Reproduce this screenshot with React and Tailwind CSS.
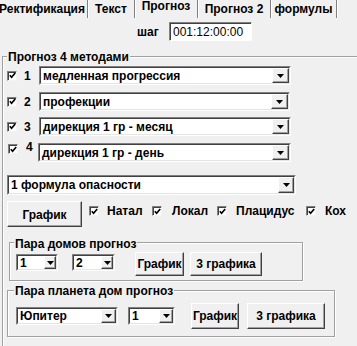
import React from 'react';

const Arrow = () => (
  <svg width="7" height="4" viewBox="0 0 7 4">
    <path d="M0 0h7L3.5 4z" fill="#000" />
  </svg>
);

const Check = ({ className = '' }) => (
  <span className={`flex w-[10px] h-[10px] shrink-0 items-center justify-center bg-white border border-t-[#808080] border-l-[#808080] border-r-[#f4f4f4] border-b-[#f4f4f4] shadow-[inset_1px_1px_0_#404040] ${className}`}>
    <svg width="7" height="7" viewBox="0 0 7 7">
      <path d="M0.8 3.2 L2.6 5.2 L6.2 1" stroke="#000" strokeWidth="1.7" fill="none" />
    </svg>
  </span>
);

const Select = ({ value, className = '', btn = 'w-[17px]' }) => (
  <div className={`flex shrink-0 border border-t-[#808080] border-l-[#808080] border-r-white border-b-white ${className}`}>
    <div className="flex flex-1 bg-white border border-t-[#404040] border-l-[#404040] border-r-[#e4e4e4] border-b-[#e4e4e4]">
      <span className="flex-1 pl-[2px] leading-[14px] self-center whitespace-nowrap overflow-hidden">{value}</span>
      <span className={`flex items-center justify-center bg-[#f0f0f0] border border-t-white border-l-white border-r-[#404040] border-b-[#404040] shadow-[inset_-1px_-1px_0_#a0a0a0] ${btn}`}>
        <Arrow />
      </span>
    </div>
  </div>
);

const Button = ({ children, className = '' }) => (
  <button className={`flex shrink-0 items-center justify-center bg-[#f0f0f0] border border-t-white border-l-white border-r-[#404040] border-b-[#404040] shadow-[inset_-1px_-1px_0_#a0a0a0] font-bold ${className}`}>
    {children}
  </button>
);

const Group = ({ title, className = '', legend = '', children }) => (
  <div className={`relative border border-[#a0a0a0] shadow-[inset_1px_1px_0_#fff,1px_1px_0_#fff] ${className}`}>
    <span className={`absolute bg-[#f0f0f0] px-[1px] leading-[14px] whitespace-nowrap ${legend}`}>{title}</span>
    {children}
  </div>
);

const tabs = [
  { label: 'Ректификация', w: 'w-[91px]' },
  { label: 'Текст', w: 'w-[47px]' },
  { label: 'Прогноз', w: 'w-[63px]', active: true },
  { label: 'Прогноз 2', w: 'w-[73px]' },
  { label: 'формулы', w: 'w-[66px]' },
];

const rows = [
  { n: '1', v: 'медленная прогрессия', pad: 'pl-[4px]', sel: 'w-[252px]', mt: 'mt-[9px]' },
  { n: '2', v: 'профекции', pad: 'pl-[4px]', sel: 'w-[251px]', mt: 'mt-[7px]' },
  { n: '3', v: 'дирекция 1 гр - месяц', pad: 'pl-[4px]', sel: 'w-[252px]', mt: 'mt-[6px]' },
];

export default function App() {
  return (
    <div className="w-[357px] h-[346px] overflow-hidden bg-[#f0f0f0] text-black text-[12px] font-bold font-['Liberation_Sans',Arial,sans-serif] flex flex-col">
      {/* tabs */}
      <div className="flex h-[18px] ml-[-3px] shrink-0">
        {tabs.map((t) => (
          <div
            key={t.label}
            className={`${t.w} h-[18px] border-r border-r-[#808080] shadow-[1px_0_0_#fff] text-center whitespace-nowrap ${t.active ? 'leading-[12px]' : 'pt-[2px] leading-[14px]'}`}
          >
            {t.label}
          </div>
        ))}
      </div>

      {/* step */}
      <div className="flex items-center mt-[4px] ml-[137px] shrink-0">
        <span className="w-[32px] leading-[14px]">шаг</span>
        <div className="w-[83px] h-[19px] flex items-center bg-white border border-t-[#808080] border-l-[#808080] border-r-white border-b-white shadow-[inset_1px_1px_0_#404040] pl-[3px] font-normal text-[12px] leading-[14px]">
          001:12:00:00
        </div>
      </div>

      {/* main group */}
      <Group title="Прогноз 4 методами" className="ml-[2px] mt-[15px] flex-1 mr-[-10px] mb-[-10px]" legend="-top-[7px] left-[4px]">
        <div className="flex flex-col pl-[0px]">
          {rows.map((r) => (
            <div key={r.n} className={`flex items-center h-[19px] ${r.mt}`}>
              <div className={`w-[21px] ${r.pad}`}><Check /></div>
              <span className="w-[15px] leading-[14px]">{r.n}</span>
              <Select value={r.v} className={`${r.sel} h-[19px]`} />
            </div>
          ))}
          <div className="flex items-start h-[19px] mt-[7px]">
            <div className="w-[21px] pl-[5px] mt-[1px]"><Check /></div>
            <span className="w-[12px] leading-[14px] -mt-[3px] ml-[2px]">4</span>
            <Select value="дирекция 1 гр - день" className="w-[253px] h-[19px]" />
          </div>

          <Select value="1 формула опасности" className="ml-[4px] mt-[13px] w-[289px] h-[20px]" btn="w-[16px]" />

          <div className="flex items-start mt-[6px] ml-[4px]">
            <Button className="w-[75px] h-[26px] pt-[2px]">График</Button>
            <div className="flex items-start mt-[3px] ml-[7px] leading-[14px]">
              <div className="flex w-[63px]"><Check className="mt-[2px]" /><span className="ml-[8px]">Натал</span></div>
              <div className="flex w-[65px]"><Check className="mt-[2px]" /><span className="ml-[10px]">Локал</span></div>
              <div className="flex w-[89px]"><Check className="mt-[2px]" /><span className="ml-[9px]">Плацидус</span></div>
              <div className="flex"><Check className="mt-[2px]" /><span className="ml-[9px]">Кох</span></div>
            </div>
          </div>

          <Group title="Пара домов прогноз" className="ml-[6px] mt-[15px] w-[294px] h-[39px]" legend="-top-[6px] left-[4px]">
            <div className="flex items-start pt-[9px] pl-[6px]">
              <Select value="1" className="w-[42px] h-[17px] mt-[2px]" btn="w-[12px]" />
              <Select value="2" className="w-[43px] h-[17px] mt-[2px] ml-[14px]" btn="w-[12px]" />
              <Button className="w-[49px] h-[24px] ml-[20px]">График</Button>
              <Button className="w-[72px] h-[24px] ml-[6px]">3 графика</Button>
            </div>
          </Group>

          <Group title="Пара планета дом прогноз" className="ml-[4px] mt-[9px] w-[328px] h-[47px]" legend="-top-[7px] left-[6px]">
            <div className="flex items-start pt-[12px] pl-[8px]">
              <Select value="Юпитер" className="w-[102px] h-[18px] mt-[4px]" btn="w-[15px]" />
              <Select value="1" className="w-[47px] h-[18px] mt-[4px] ml-[10px]" btn="w-[14px]" />
              <Button className="w-[48px] h-[26px] ml-[16px]">График</Button>
              <Button className="w-[78px] h-[26px] ml-[8px]">3 графика</Button>
            </div>
          </Group>
        </div>
      </Group>
    </div>
  );
}
